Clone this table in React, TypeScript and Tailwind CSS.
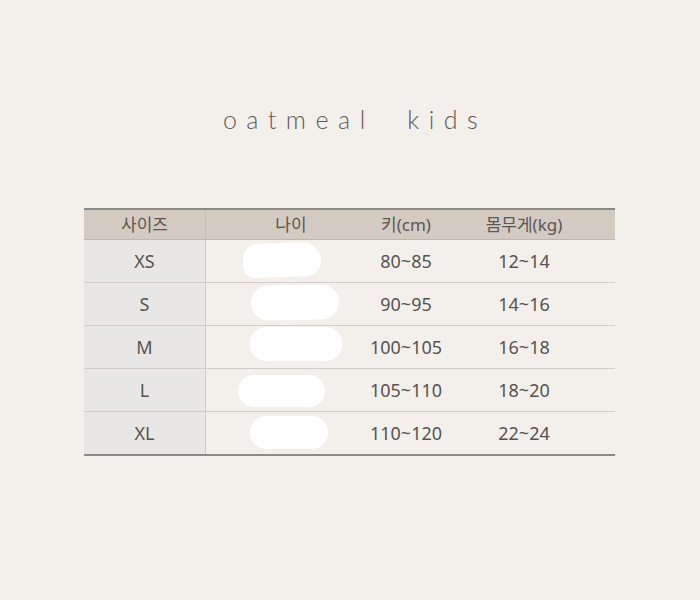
import React from "react";

// ─── Size chart data ──────────────────────────────────────────────────────────
const ROWS = [
  { size: "XS", height: "80~85", weight: "12~14", blob: "ml-[37px] mt-[3px] w-[78px] h-[34px] rounded-[18px_22px_18px_14px] -rotate-2" },
  { size: "S", height: "90~95", weight: "14~16", blob: "ml-[45px] mt-[2px] w-[88px] h-[35px] rounded-[18px] -rotate-1" },
  { size: "M", height: "100~105", weight: "16~18", blob: "ml-[44px] mt-[1px] w-[92px] h-[34px] rounded-[16px]" },
  { size: "L", height: "105~110", weight: "18~20", blob: "ml-[32px] mt-[6px] w-[87px] h-[32px] rounded-[16px]" },
  { size: "XL", height: "110~120", weight: "22~24", blob: "ml-[44px] mt-[4px] w-[78px] h-[33px] rounded-[16px]" },
];

const FONT = "font-['Noto_Sans','Noto_Sans_CJK_KR',sans-serif]";

export default function App() {
  return (
    <div className={`w-[700px] h-[600px] bg-[#f3f0ec] ${FONT} text-[#575350] flex flex-col items-center`}>
      <h1 className="mt-[101px] pl-[10px] text-[25px] leading-[36px] tracking-[0.38em] text-[#5f5b58] font-light font-['Lato',sans-serif] whitespace-pre">
        oatmeal  kids
      </h1>

      {/* Table */}
      <div className="mt-[71px] w-[531px] ml-[-1px] border-t-2 border-b-2 border-t-[#8c8884] border-b-[#8e8a86]">
        <div className="grid grid-cols-[122px_170px_60px_1fr] h-[30px] bg-[#d3cbc2] border-b border-[#bdb6ae] text-[17px] text-[#5a5653]">
          <div className="flex items-center justify-center border-r border-[#c4bdb5]">사이즈</div>
          <div className="flex items-center justify-center">나이</div>
          <div className="flex items-center justify-center whitespace-nowrap">키(cm)</div>
          <div className="flex items-center justify-center whitespace-nowrap pr-[3px]">몸무게(kg)</div>
        </div>
        {ROWS.map((r, i) => (
          <div
            key={r.size}
            className={`grid grid-cols-[122px_170px_60px_1fr] text-[18px] ${
              i < ROWS.length - 1 ? "h-[43px] border-b border-[#d2cdc8]" : "h-[42px]"
            }`}
          >
            <div className="flex items-center justify-center bg-[#e8e7e5] border-r border-[#cdcac6]">
              {r.size}
            </div>
            <div className="flex items-start">
              <div className={`bg-white ${r.blob}`} />
            </div>
            <div className="flex items-center justify-center whitespace-nowrap">{r.height}</div>
            <div className="flex items-center justify-center whitespace-nowrap pr-[3px]">{r.weight}</div>
          </div>
        ))}
      </div>
    </div>
  );
}
